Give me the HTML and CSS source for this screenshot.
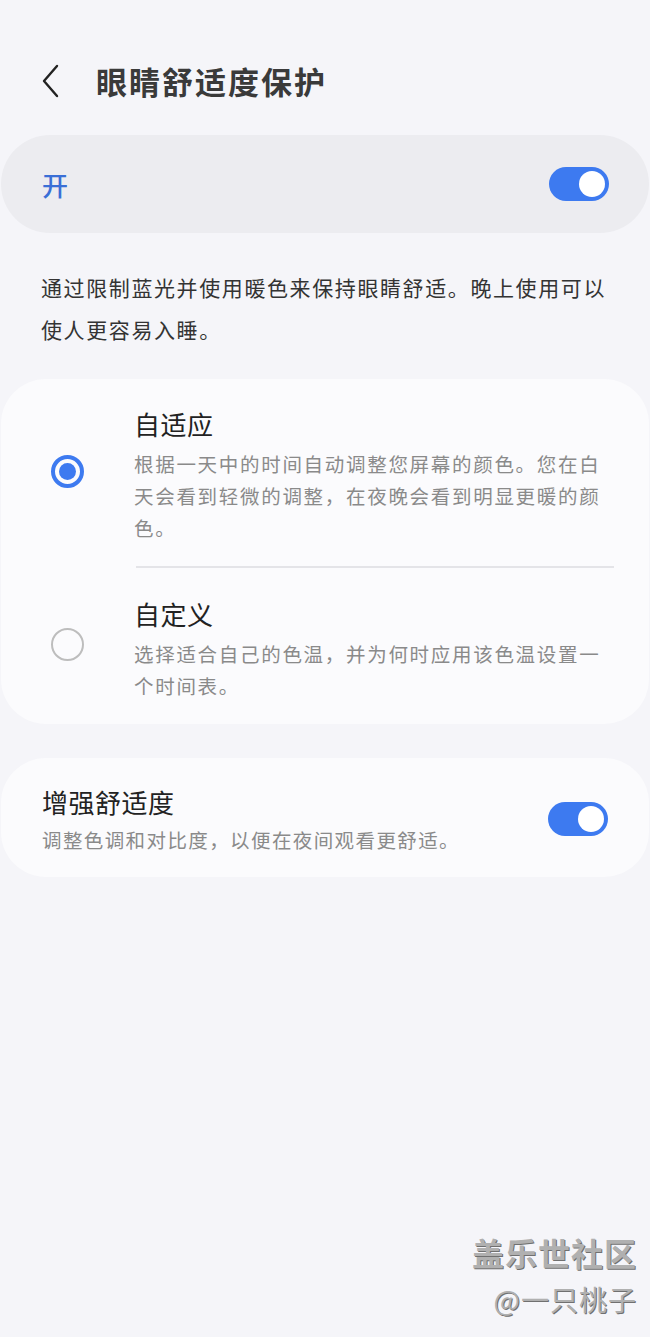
FILE: index.html
```html
<!DOCTYPE html>
<html lang="zh-CN">
<head>
<meta charset="utf-8">
<title>眼睛舒适度保护</title>
<link rel="stylesheet" href="styles.css">
</head>
<body>
<div class="page">
  <header class="header">
    <svg class="back" width="20" height="34" viewBox="0 0 20 34" aria-hidden="true">
      <polyline points="16,2 3,17 16,32" fill="none" stroke="#222" stroke-width="2.4" stroke-linecap="round" stroke-linejoin="round"/>
    </svg>
    <h1 class="title">眼睛舒适度保护</h1>
  </header>

  <section class="master">
    <span class="master-label">开</span>
    <span class="toggle"><span class="knob"></span></span>
  </section>

  <p class="intro">通过限制蓝光并使用暖色来保持眼睛舒适。晚上使用可以使人更容易入睡。</p>

  <section class="card options">
    <div class="option first">
      <div class="radio-col"><span class="radio checked"></span></div>
      <div class="option-text">
        <div class="item-title">自适应</div>
        <div class="item-desc">根据一天中的时间自动调整您屏幕的颜色。您在白天会看到轻微的调整，在夜晚会看到明显更暖的颜色。</div>
      </div>
    </div>
    <div class="divider"></div>
    <div class="option second">
      <div class="radio-col"><span class="radio"></span></div>
      <div class="option-text">
        <div class="item-title">自定义</div>
        <div class="item-desc">选择适合自己的色温，并为何时应用该色温设置一个时间表。</div>
      </div>
    </div>
  </section>

  <section class="card enhance">
    <div class="enhance-text">
      <div class="item-title">增强舒适度</div>
      <div class="item-desc">调整色调和对比度，以便在夜间观看更舒适。</div>
    </div>
    <span class="toggle"><span class="knob"></span></span>
  </section>

  <div class="watermark">
    <div class="wm-main">盖乐世社区</div>
    <div class="wm-sub">@一只桃子</div>
  </div>
</div>
</body>
</html>
```

FILE: styles.css
```css
html, body {
  margin: 0;
  padding: 0;
  background: #f5f5f9;
}

body {
  font-family: "Noto Sans CJK SC", "Noto Sans", sans-serif;
  color: #222;
}

.page {
  position: relative;
  width: 650px;
  height: 1337px;
  overflow: hidden;
}

.header {
  display: flex;
  align-items: center;
  height: 48px;
  margin-top: 57px;
  padding-left: 41px;
}

.back {
  display: block;
  margin-right: 35px;
}

.title {
  margin: 0;
  font-size: 31px;
  font-weight: 700;
  letter-spacing: 2px;
  color: #3a3a3a;
  line-height: 48px;
}

.master {
  display: flex;
  align-items: center;
  justify-content: space-between;
  height: 98px;
  margin: 30px 1px 0 1px;
  padding: 0 40px 0 41px;
  background: #ececf0;
  border-radius: 49px;
}

.master-label {
  font-size: 26px;
  color: #3a6fd6;
  font-weight: 500;
}

.toggle {
  display: flex;
  justify-content: flex-end;
  align-items: center;
  width: 60px;
  height: 34px;
  box-sizing: border-box;
  padding: 0 4px;
  background: #3d7af0;
  border-radius: 17px;
}

.knob {
  width: 26px;
  height: 26px;
  border-radius: 50%;
  background: #fff;
}

.intro {
  margin: 33px 0 0 0;
  padding: 0 40px 0 41px;
  font-size: 21px;
  line-height: 42px;
  letter-spacing: 1.6px;
  color: #333;
}

.card {
  background: #fbfbfd;
  border-radius: 45px;
  margin: 0 1px;
}

.options {
  margin-top: 29px;
}

.option {
  display: flex;
  align-items: center;
}

.option.first {
  padding: 27px 0 22px 0;
}

.option.second {
  padding: 28px 0 22px 0;
}

.radio-col {
  display: flex;
  justify-content: center;
  width: 133px;
  flex: none;
  padding-bottom: 7px;
}

.second .radio-col {
  padding-bottom: 9px;
}

.radio {
  box-sizing: border-box;
  width: 33px;
  height: 33px;
  border-radius: 50%;
  border: 2.5px solid #bdbdbd;
  display: flex;
  align-items: center;
  justify-content: center;
}

.radio.checked {
  border: 4px solid #3d7af0;
}

.radio.checked::after {
  content: "";
  width: 17px;
  height: 17px;
  border-radius: 50%;
  background: #3d7af0;
}

.option-text {
  flex: 1;
  padding-right: 40px;
}

.item-title {
  font-size: 26px;
  line-height: 36px;
  letter-spacing: 0.5px;
  color: #222;
}

.item-desc {
  margin-top: 6px;
  font-size: 19.5px;
  line-height: 32px;
  letter-spacing: 1.7px;
  color: #8a8a8a;
}

.divider {
  height: 2px;
  background: #e4e4e8;
  margin: 0 35px 0 135px;
}

.enhance {
  display: flex;
  align-items: center;
  justify-content: space-between;
  margin-top: 34px;
  padding: 26px 41px 21px 41px;
}

.enhance .toggle {
  margin-bottom: 3px;
}

.enhance .item-desc {
  margin-top: 4px;
  letter-spacing: 1.4px;
}

.watermark {
  position: absolute;
  right: 13px;
  top: 1230px;
  text-align: right;
  color: #b0b0b0;
  text-shadow: 1px 1px 0 #707070;
}

.wm-main {
  font-size: 32px;
  line-height: 44px;
  font-weight: 700;
  letter-spacing: 1px;
}

.wm-sub {
  margin-top: 6px;
  font-size: 28px;
  line-height: 38px;
  letter-spacing: 1px;
}
```
